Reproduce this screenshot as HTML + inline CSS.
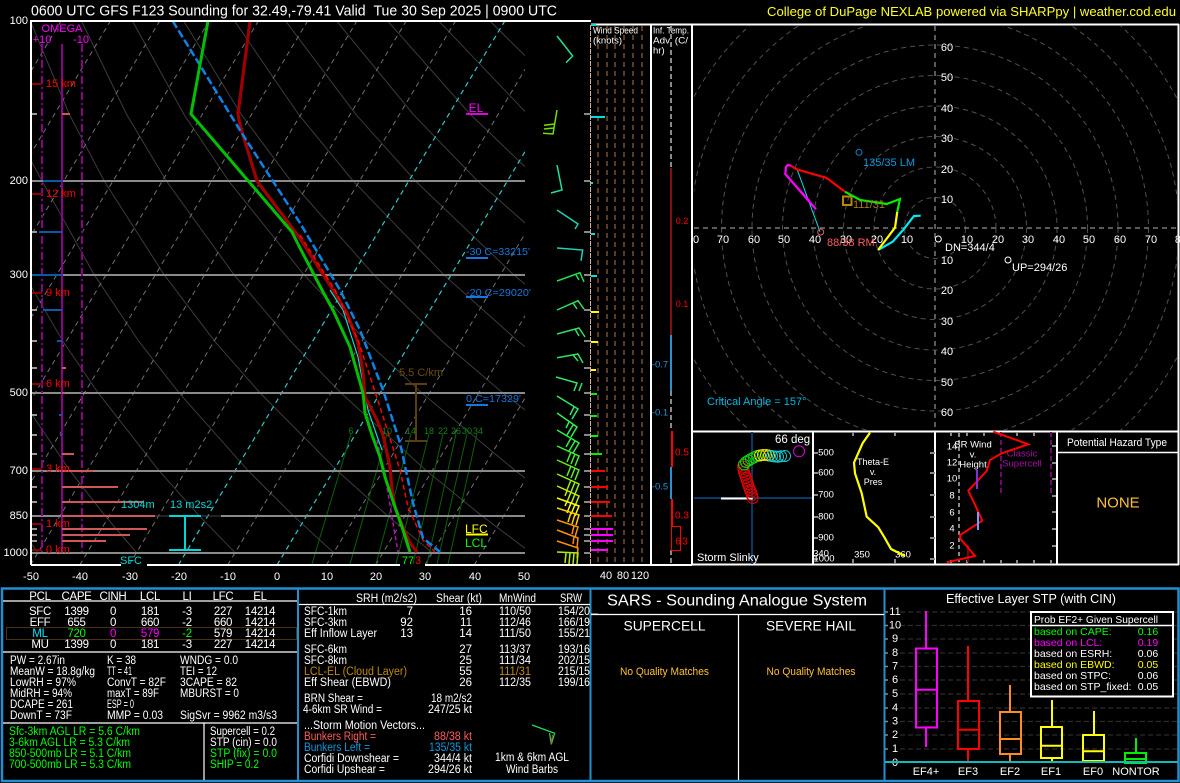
<!DOCTYPE html>
<html>
<head>
<meta charset="utf-8">
<title>SHARPpy Sounding</title>
<style>
html,body{margin:0;padding:0;background:#000;width:1180px;height:783px;overflow:hidden}
svg{display:block}
text{font-family:"Liberation Sans",sans-serif;font-size:11px;fill:#fff;dominant-baseline:central}
.m{text-anchor:middle}.e{text-anchor:end}
.s{font-size:9.5px}
.g{fill:#00ff00}.r{fill:#ff0000}.c{fill:#00d8d8}.bl{fill:#1478e0}
.t text{letter-spacing:-.3px;font-size:11.5px}
.p text{font-size:11.5px}
path,line,rect,circle,polyline{fill:none}
</style>
</head>
<body>
<svg xmlns="http://www.w3.org/2000/svg" width="1180" height="783" viewBox="0 0 1180 783">
<defs>
<clipPath id="skew"><rect x="32" y="22" width="493" height="542"/></clipPath>
<clipPath id="hodo"><rect x="694" y="26" width="483" height="404"/></clipPath>
</defs>
<rect x="0" y="0" width="1180" height="783" style="fill:#000"/>

<!-- header -->
<text x="31" y="11" style="font-size:15px" textLength="526" lengthAdjust="spacingAndGlyphs">0600 UTC GFS F123 Sounding for 32.49,-79.41 Valid&#160;&#160;Tue 30 Sep 2025 | 0900 UTC</text>
<text x="767" y="12" style="font-size:12.5px;fill:#ffff20" textLength="409" lengthAdjust="spacingAndGlyphs">College of DuPage NEXLAB powered via SHARPpy | weather.cod.edu</text>

<!-- SKEW-T grid -->
<g clip-path="url(#skew)">
 <path stroke="#3c3c3c" stroke-width="1" d="M37.9 552.7L10.5 515.2
 M136.5 552.7L104.6 515.2L69.7 470.3L17.1 392.6
 M235.1 552.7L198.7 515.2L158.7 470.3L98 392.6L62.8 341.1L24.3 274.7
 M333.7 552.7L292.8 515.2L247.8 470.3L178.8 392.6L138.7 341.1L94.2 274.7L42 181L20 140
 M432.3 552.7L386.9 515.2L336.8 470.3L259.8 392.6L214.5 341.1L164.1 274.7L104.2 181L69.4 114.6L30.4 21
 M530.9 552.7L481 515.2L425.9 470.3L340.6 392.6L290.4 341.1L234 274.7L166.4 181L126.7 114.6L81.5 21
 M575 515.2L514.9 470.3L421.5 392.6L366.3 341.1L303.9 274.7L228.7 181L184.1 114.6L132.5 21
 M603.9 470.3L502.4 392.6L442.1 341.1L373.8 274.7L290.9 181L241.4 114.6L183.6 21
 M583.3 392.6L518 341.1L443.7 274.7L353.2 181L298.7 114.6L234.6 21
 M593.8 341.1L513.6 274.7L415.4 181L356 114.6L285.6 21
 M583.5 274.7L477.6 181L413.4 114.6L336.7 21
 M539.8 181L470.6 114.6L387.7 21
 M528 114.6L438.8 21
 M585 114.6L489.8 21"/>
 <path stroke="#707070" stroke-width="1" stroke-dasharray="5 4" d="M-265.3 565L61.1 21M-216 565L110.4 21M-166.7 565L159.7 21M-117.4 565L209 21M-68.1 565L258.3 21M-18.8 565L307.6 21M30.5 565L356.9 21M79.8 565L406.2 21M129.1 565L455.5 21M227.7 565L554.1 21M326.3 565L652.7 21M375.6 565L702 21M424.9 565L751.3 21M474.2 565L800.6 21"/>
 <path stroke="#30c8c8" stroke-width="1.2" stroke-dasharray="5 4" d="M178.4 565L504.8 21M277 565L603.4 21"/>
 <!-- mixing ratio -->
 <path stroke="#0a600a" stroke-width="1" d="M351 434L312 564M387 434L350 564M411 434L376 564M429 434L396 564M443 434L413 564M456 434L427 564M467 434L437 564M477 434L448 564"/>
 <!-- isobars -->
 <path stroke="#8a8a8a" stroke-width="2" d="M31 181H525M31 275H525M31 393H525M31 471H525M31 516H155M221 516H525M31 553H525"/>
 <path stroke="#444" stroke-width="1" d="M155 516H221"/>
</g>
<!-- left ticks -->
<path stroke="#999" stroke-width="2" d="M31 114H37M31 232H37M31 310H37M31 341H37M31 368H37M31 415H37M31 435H37M31 454H37M31 487H37M31 502H37M31 529H37M31 535H37M31 541H37"/>
<!-- right ticks -->
<path stroke="#888" stroke-width="2" d="M584 114H590M584 181H590M584 232H590M584 275H590M584 310H590M584 341H590M584 368H590M584 393H590M584 415H590M584 435H590M584 454H590M584 471H590M584 487H590M584 502H590M584 516H590M584 529H590M584 535H590M584 541H590M584 553H590"/>

<!-- omega -->
<path stroke="#8b008b" stroke-width="2" d="M62 44V552"/>
<path stroke="#8b008b" stroke-width="2" stroke-dasharray="8 3 2 3" d="M42 44V552M82 44V552"/>
<text x="62" y="29" class="m" style="fill:#ff00ff;font-size:11px">OMEGA</text>
<text x="42" y="40" class="m" style="fill:#ff00ff;font-size:11px">+10</text>
<text x="81" y="40" class="m" style="fill:#ff00ff;font-size:11px">-10</text>
<path stroke="#d05858" stroke-width="2" d="M62 114H70M62 368H66M62 393H65M62 454H74M62 471H93M62 487H118M62 502H143M62 516H155M62 529H147M62 535H130M62 541H106"/>
<path stroke="#0b5aa8" stroke-width="2" d="M43 181H62M39 232H62M32 275H62M43 310H62M57 341H62M59 415H62M60 435H62"/>
<!-- height -->
<path stroke="#8b0000" stroke-width="2" d="M31 84H42M31 194H42M31 293H42M31 384H42M31 469H42M31 524H42M31 550H42"/>
<g class="h">
<text x="46" y="84" class="r">15 km</text>
<text x="46" y="194" class="r">12 km</text>
<text x="46" y="293" class="r">9 km</text>
<text x="46" y="384" class="r">6 km</text>
<text x="46" y="469" class="r">3 km</text>
<text x="46" y="524" class="r">1 km</text>
<text x="46" y="550" class="r">0 km</text>
</g>

<!-- profiles -->
<polyline stroke="#00e0d0" stroke-width="1.2" points="330,290 343,310 358,357 368,410 377,436 382,450"/>
<polyline stroke="#d000d0" stroke-width="1.5" stroke-dasharray="4 3" points="377,440 387,487 392,517 398,552"/>
<polyline stroke="#a00000" stroke-width="3.2" points="250,21 245,60 238,114 240,125 257,181 299,237 333,290 347,313 358,343 363,373 365,397 377,420 383,435 390,467 392,490 395,507 403,527 410,543 417,552"/>
<polyline stroke="#ff0000" stroke-width="1.5" stroke-dasharray="5 3" points="300,235 335,290 358,340 380,407 400,470 408,507 423,540 435,552"/>
<polyline stroke="#0a84e8" stroke-width="2.5" stroke-dasharray="8 3" points="172.7,21 241.7,133 300,223 340,290 360,330 383,390 400,443 413,503 423,538 440,552"/>
<polyline stroke="#00c000" stroke-width="3" points="208,21 191,114 292,232 300,248 322,290 333,310 350,347 363,393 365,413 372,435 380,457 385,477 395,507 403,530 410,552"/>

<!-- labels on skew-t -->
<path stroke="#e000e0" stroke-width="2" d="M466 114H488"/>
<text x="476" y="108" class="m" style="fill:#ff00ff;font-size:12px">EL</text>
<path stroke="#1478e0" stroke-width="2" d="M466 258H488M466 297H488M466 405H488"/>
<text x="466" y="252" class="bl" style="font-size:10.5px" textLength="64" lengthAdjust="spacingAndGlyphs">-30 C=33215'</text>
<text x="466" y="293" class="bl" style="font-size:10.5px" textLength="65" lengthAdjust="spacingAndGlyphs">-20 C=29020'</text>
<text x="466" y="399" class="bl" style="font-size:10.5px" textLength="55" lengthAdjust="spacingAndGlyphs">0 C=17329'</text>
<path stroke="#ffff00" stroke-width="2" d="M466 534.5H488"/>
<text x="465" y="529" style="fill:#ffff00;font-size:12px">LFC</text>
<text x="465" y="543" class="g" style="font-size:12px">LCL</text>
<text x="421" y="373" class="m" style="fill:#6e4c12;font-size:11px">5.5 C/km</text>
<path stroke="#5a3d10" stroke-width="2" d="M405 384H427M405 441H427M416 384V441"/>
<path stroke="#00d8d8" stroke-width="2" d="M169 516H201M169 550H201M185 516V550"/>
<text x="121" y="505" class="c">1304m</text>
<text x="170" y="505" class="c">13 m2s2</text>
<g style="fill:#0a8a0a">
<text x="351" y="431" class="m" style="fill:#128012;font-size:9px">6</text>
<text x="387" y="431" class="m" style="fill:#128012;font-size:9px">10</text>
<text x="411" y="431" class="m" style="fill:#128012;font-size:9px">14</text>
<text x="429" y="431" class="m" style="fill:#128012;font-size:9px">18</text>
<text x="443" y="431" class="m" style="fill:#128012;font-size:9px">22</text>
<text x="456" y="431" class="m" style="fill:#128012;font-size:9px">26</text>
<text x="467" y="431" class="m" style="fill:#128012;font-size:9px">30</text>
<text x="478" y="431" class="m" style="fill:#128012;font-size:9px">34</text>
</g>

<!-- frame -->
<path stroke="#fff" stroke-width="2" d="M31 565V21H591M31 565H121M147 565H400M425 565H591"/>
<text x="131" y="561" class="m c">SFC</text>
<text x="408" y="561" class="m g">77</text>
<text x="418" y="561" class="m r">3</text>

<!-- axis text -->
<text x="28" y="21" class="e">100</text>
<text x="28" y="181" class="e">200</text>
<text x="28" y="275" class="e">300</text>
<text x="28" y="393" class="e">500</text>
<text x="28" y="471" class="e">700</text>
<text x="28" y="516" class="e">850</text>
<text x="28" y="553" class="e">1000</text>
<text x="31" y="577" class="m">-50</text>
<text x="80" y="577" class="m">-40</text>
<text x="130" y="577" class="m">-30</text>
<text x="179" y="577" class="m">-20</text>
<text x="228" y="577" class="m">-10</text>
<text x="277" y="577" class="m">0</text>
<text x="327" y="577" class="m">10</text>
<text x="376" y="577" class="m">20</text>
<text x="425" y="577" class="m">30</text>
<text x="475" y="577" class="m">40</text>
<text x="524" y="577" class="m">50</text>

<!-- wind barbs -->
<g stroke-width="1.5" fill="none">
<path stroke="#20e090" d="M557 36L572.7 56L566 62.7"/>
<path stroke="#70e000" d="M557 110L553 134L543 133.3M554 128L544 129M554.7 124L544 125.3"/>
<path stroke="#20e0a0" d="M557 165L562 190L551 193"/>
<path stroke="#20d0b0" d="M557 210L578 224L575 229"/>
<path stroke="#20d0b8" d="M557 248L582.7 250L581 260.7"/>
<path stroke="#20e050" d="M557 281L580 272.7L584 282M576 275L579 280"/>
<path stroke="#30e060" d="M557 310L578 300.7L584 309M573 303L577 309"/>
<path stroke="#30e060" d="M557 334L579 328L585 337M575 329L579 336"/>
<path stroke="#30e060" d="M557 357.7L578 354L583 363M573 355L578 361"/>
<path stroke="#30e868" d="M556 377L577 383L574 391M582 383L579 391"/>
<path stroke="#30e868" d="M557 396L578 409L572 419M574 407L570 415"/>
<path stroke="#30f050" d="M557 413L577 427L571 437M573 425L567 435M569 422L566 428"/>
<path stroke="#30f040" d="M557 430L579 443L573 453M575 441L569 451M571 438L566 447"/>
<path stroke="#40f030" d="M557 446L579 456L575 466M575 454L571 464M571 452L567 462"/>
<path stroke="#60f020" d="M557 460L579 470L575 480M575 468L571 478M571 466L567 476"/>
<path stroke="#90f010" d="M557 474L579 484L575 494M575 482L571 492M571 480L567 490"/>
<path stroke="#c0f000" d="M557 486L579 496L575 506M575 494L571 504M571 492L567 502M567 491L565 496"/>
<path stroke="#ffff00" d="M557 498L579 506L575 516M575 504.5L571 514.5M571 503L567 513M567 501.5L565 506"/>
<path stroke="#ffd000" d="M557 508L579 515L576 525M575 514L572 524M571 512.5L568 522"/>
<path stroke="#ff9000" d="M557 520L578 527L575 537M574 526L572 534"/>
<path stroke="#ff9000" d="M557 530L578 538L577 548M574 536.5L573 544"/>
<path stroke="#ff9000" d="M557 541L578 548L577 558"/>
<path stroke="#b0f000" d="M557 552L578 553L577 564M574 553L573 564M570 553L569 564M566 553L565 563"/>
</g>

<!-- wind speed panel -->
<path stroke="#5a3a20" stroke-width="2" stroke-dasharray="5 4" d="M598 26V564M607 26V564M615 26V564M624 26V564M633 26V564M642 26V564"/>
<path stroke="#d8b0a0" stroke-width="1" stroke-dasharray="5 1" d="M590.5 25V564"/>
<path stroke="#fff" stroke-width="2" d="M591 24.5H693M651 25V565M692 25V565M591 565H692"/>
<text x="593" y="31" class="s" textLength="45" lengthAdjust="spacingAndGlyphs">Wind Speed</text>
<text x="593" y="41" class="s">(knots)</text>
<text x="653" y="31" class="s" textLength="36" lengthAdjust="spacingAndGlyphs">Inf. Temp.</text>
<text x="653" y="41" class="s" textLength="35" lengthAdjust="spacingAndGlyphs">Adv. (C/</text>
<text x="653" y="51" class="s">hr)</text>
<path stroke="#00e0e0" stroke-width="2" d="M591 25H596M591 117H605M591 183H593M591 234H595M591 276H597"/>
<path stroke="#ffff00" stroke-width="2" d="M591 312H599M591 342H598M591 370H596"/>
<path stroke="#00f000" stroke-width="2" d="M591 394H597M591 416H597M591 436H598M591 454H602"/>
<path stroke="#ff0000" stroke-width="2" d="M591 471H605M591 487H608M591 502H610M591 516H612"/>
<path stroke="#ff00ff" stroke-width="2" d="M591 529H613M591 535H613M591 541H613M591 550H608"/>
<text x="606" y="576" class="m">40</text>
<text x="623" y="576" class="m">80</text>
<text x="640" y="576" class="m">120</text>

<!-- inf temp adv -->
<path stroke="#8a8a8a" stroke-width="2" stroke-dasharray="5 3" d="M671 26V168M671 391V431M671 550V564"/>
<path stroke="#ff2020" stroke-width="1" d="M671 168V335"/>
<path stroke="#2a90d0" stroke-width="2" d="M671 335V391M671 467V499"/>
<path stroke="#ff0000" stroke-width="2" d="M672 431V467M672 499V526"/>
<rect x="671.5" y="526.5" width="9" height="24" stroke="#ff0000" stroke-width="1"/>
<g style="font-size:9px">
<text x="682" y="221" class="m r" style="font-size:9px">0.2</text>
<text x="682" y="304" class="m r" style="font-size:9px">0.1</text>
<text x="682" y="453" class="m r" style="font-size:10px">0.5</text>
<text x="682" y="516" class="m r" style="font-size:10px">0.3</text>
<text x="678" y="542" class="m r" style="font-size:10px">6</text>
<text x="685" y="542" class="m r" style="font-size:10px">3</text>
<text x="660" y="365" class="m" style="fill:#2a90d0;font-size:9.5px">-0.7</text>
<text x="660" y="413" class="m" style="fill:#2a90d0;font-size:9.5px">-0.1</text>
<text x="660" y="487" class="m" style="fill:#2a90d0;font-size:9.5px">-0.5</text>
</g>

<!-- hodograph -->
<g clip-path="url(#hodo)">
<g stroke="#505050" stroke-width="1" stroke-dasharray="5 4">
<circle cx="935" cy="228" r="30.5"/><circle cx="935" cy="228" r="61"/><circle cx="935" cy="228" r="91.5"/><circle cx="935" cy="228" r="122"/><circle cx="935" cy="228" r="152.5"/><circle cx="935" cy="228" r="183"/><circle cx="935" cy="228" r="213.5"/><circle cx="935" cy="228" r="244"/><circle cx="935" cy="228" r="274.5"/>
</g>
<path stroke="#777" stroke-width="1.5" stroke-dasharray="5 4" d="M694 228H1177M935 26V430"/>
</g>
<g>
<text x="947" y="48" class="m">60</text><text x="947" y="78" class="m">50</text><text x="947" y="109" class="m">40</text><text x="947" y="139" class="m">30</text><text x="947" y="170" class="m">20</text><text x="947" y="200" class="m">10</text>
<text x="947" y="261" class="m">10</text><text x="947" y="291" class="m">20</text><text x="947" y="322" class="m">30</text><text x="947" y="352" class="m">40</text><text x="947" y="383" class="m">50</text><text x="947" y="413" class="m">60</text>
<text x="696" y="240" class="m">0</text><text x="723" y="240" class="m">70</text><text x="754" y="240" class="m">60</text><text x="784" y="240" class="m">50</text><text x="815" y="240" class="m">40</text><text x="846" y="240" class="m">30</text><text x="877" y="240" class="m">20</text><text x="907" y="240" class="m">10</text>
<text x="967" y="240" class="m">10</text><text x="998" y="240" class="m">20</text><text x="1028" y="240" class="m">30</text><text x="1059" y="240" class="m">40</text><text x="1089" y="240" class="m">50</text><text x="1120" y="240" class="m">60</text><text x="1151" y="240" class="m">70</text><text x="1181" y="240" class="m">80</text>
</g>
<polyline stroke="#00e0e0" stroke-width="1" points="796.7,168.3 820,231.7"/>
<polyline stroke="#e000e0" stroke-width="1" points="785,173.3 810,200.7"/>
<polyline stroke="#00e8f0" stroke-width="2.2" points="920.7,215.7 914,216 903,230 892.7,241.7 878,250"/>
<polyline stroke="#ffff00" stroke-width="2.2" points="878,250 895,227.7 897.3,211.7"/>
<polyline stroke="#00f000" stroke-width="2.2" points="897.3,211.7 900,199 886.7,204 860,200 845,191.7"/>
<polyline stroke="#ff0000" stroke-width="2.2" points="845,191.7 826.7,178 796.7,169.3 791,165.7"/>
<polyline stroke="#ff00ff" stroke-width="2.2" points="791,165.7 788,165 786,166.7 785.3,174 816,209.3"/>
<circle cx="820.7" cy="232" r="3" stroke="#e06060" stroke-width="1"/>
<circle cx="859" cy="152.3" r="3" stroke="#0a84d0" stroke-width="1"/>
<text x="863" y="163" style="fill:#0a9ae0">135/35 LM</text>
<rect x="843" y="196.5" width="8.5" height="8.5" stroke="#b8860b" stroke-width="2"/>
<text x="853" y="205" style="fill:#a87a10">111/31</text>
<text x="827" y="243" style="fill:#ff5c5c">88/38 RM</text>
<circle cx="938.3" cy="239" r="3" stroke="#fff" stroke-width="1"/>
<text x="945" y="248">DN=344/4</text>
<circle cx="1008" cy="260" r="3" stroke="#fff" stroke-width="1"/>
<text x="1012" y="268">UP=294/26</text>
<text x="707" y="402" style="fill:#00b8e0">Critical Angle = 157°</text>

<!-- borders right panel -->
<path stroke="#fff" stroke-width="2" d="M692 24.5H1179M1178.5 24V565M692 431.5H1179M813 431V565M935 431V565M1057 431V565M692 564.5H1179"/>

<!-- storm slinky -->
<path stroke="#0a3a6a" stroke-width="2" d="M694 498H812M752 432V564"/>
<path stroke="#fff" stroke-width="2" d="M721 498.5H752.7"/>
<g fill="none" stroke-width="1">
<g stroke="#e00000">
<circle cx="752.7" cy="498" r="5.5"/><circle cx="752" cy="495" r="5.5"/><circle cx="751" cy="492" r="5.5"/><circle cx="750" cy="490" r="5.5"/><circle cx="749" cy="487" r="5.5"/><circle cx="748" cy="484" r="5.5"/><circle cx="747" cy="481" r="5.5"/><circle cx="746" cy="478" r="5.5"/><circle cx="745" cy="475" r="5.5"/><circle cx="744" cy="472" r="5.5"/><circle cx="743.5" cy="469" r="5.5"/><circle cx="743" cy="466.7" r="5.5"/>
</g>
<g stroke="#10d010">
<circle cx="744" cy="464.5" r="5.5"/><circle cx="746" cy="462" r="5.5"/><circle cx="748.5" cy="460.5" r="5.5"/><circle cx="751" cy="459" r="5.5"/><circle cx="754" cy="457.5" r="5.5"/><circle cx="757" cy="456" r="5.5"/>
</g>
<g stroke="#e8e000">
<circle cx="760" cy="455.5" r="5.5"/><circle cx="763" cy="455" r="5.5"/><circle cx="766" cy="455" r="5.5"/><circle cx="769" cy="455.5" r="5.5"/>
</g>
<g stroke="#10c8d0">
<circle cx="772" cy="456" r="5.5"/><circle cx="775" cy="456.5" r="5.5"/><circle cx="778" cy="456.7" r="5.5"/><circle cx="781" cy="456.3" r="5.5"/><circle cx="785" cy="456" r="5.5"/>
</g>
<circle cx="799" cy="451.3" r="5.5" stroke="#e000e0"/>
</g>
<text x="775" y="440" style="font-size:11.5px">66 deg</text>
<text x="697" y="558" style="font-size:11px">Storm Slinky</text>

<!-- theta-e -->
<path stroke="#888" stroke-width="2" d="M814 453H818M814 473H818M814 495H818M814 517H818M814 538H818M814 559H818M930 453H935M930 473H935M930 495H935M930 517H935M930 538H935M930 559H935M853 432V436M895 432V436M853 559V564M895 559V564"/>
<text x="826" y="453" class="m s">500</text><text x="826" y="473" class="m s">600</text><text x="826" y="495" class="m s">700</text><text x="826" y="517" class="m s">800</text><text x="826" y="538" class="m s">900</text><text x="824" y="559" class="m s">1000</text>
<text x="821" y="554" class="m s">340</text><text x="862" y="555" class="m s">350</text><text x="903" y="555" class="m s">360</text>
<polyline stroke="#ffff00" stroke-width="2.2" points="870,432.7 862.7,443 854,462.7 855,473.3 861.7,493.3 866.7,516.7 878.3,527.3 885,538.3 891,549 905,556"/>
<text x="873" y="462" class="m s" style="font-size:9px">Theta-E</text><text x="873" y="472" class="m s" style="font-size:9px">v.</text><text x="873" y="482" class="m s" style="font-size:9px">Pres</text>

<!-- SR wind -->
<path stroke="#888" stroke-width="2" d="M951 432V436M967 432V436M984 432V436M1001 432V436M1017 432V436M1034 432V436M1051 432V436M951 560V564M967 560V564M984 560V564M1001 560V564M1017 560V564M1034 560V564M1051 560V564M1052 446H1056M1052 463H1056M1052 479H1056M1052 496H1056M1052 512H1056M1052 529H1056M1052 546H1056"/>
<path stroke="#888" stroke-width="2" stroke-dasharray="4 3" d="M959 433V562"/>
<path stroke="#6a0a6a" stroke-width="2" stroke-dasharray="5 3" d="M1001 432V496M1051 432V496"/>
<text x="1022" y="454" class="m s" style="fill:#a010a0">Classic</text><text x="1022" y="464" class="m s" style="fill:#a010a0">Supercell</text>
<text x="952" y="447" class="m s">14</text><text x="952" y="463" class="m s">12</text><text x="952" y="479" class="m s">10</text><text x="952" y="496" class="m s">8</text><text x="952" y="513" class="m s">6</text><text x="952" y="529" class="m s">4</text><text x="952" y="546" class="m s">2</text>
<path stroke="#800000" stroke-width="2" d="M968 545V562"/>
<polyline stroke="#ff0000" stroke-width="2" points="993.3,431.7 1028.3,444.3 1001.7,453.3 990,460 986.7,471 968.3,490.7 976.7,508.3 982.3,520.7 960,535 960,538.3 975,556 946.7,562.3"/>
<path stroke="#8a2be2" stroke-width="2" d="M977 470V489"/>
<path stroke="#6ea0ff" stroke-width="2" d="M978 512V530"/>
<text x="973" y="445" class="m s">SR Wind</text><text x="973" y="455" class="m s">v.</text><text x="973" y="465" class="m s">Height</text>

<!-- hazard -->
<path stroke="#fff" stroke-width="1.5" d="M1057 452.5H1178"/>
<text x="1117" y="443" class="m" textLength="100" lengthAdjust="spacingAndGlyphs">Potential Hazard Type</text>
<text x="1118" y="503" class="m" style="fill:#ffc030;font-size:15px">NONE</text>

<!-- BOTTOM -->
<rect x="2" y="588.5" width="1176.5" height="192.5" stroke="#2090d0" stroke-width="2.5"/>
<path stroke="#2090d0" stroke-width="2" d="M298 588V781M590.5 588V781M884.5 588V781"/>

<!-- panel 1 -->
<path stroke="#fff" stroke-width="1.2" d="M3 601H297M3 652H297M3 723H297M204 723V780"/>
<rect x="6.5" y="627.5" width="290" height="12" stroke="#4a3015" stroke-width="1"/>
<g class="t">
<text x="40" y="597" class="m">PCL</text><text x="76.5" y="597" class="m">CAPE</text><text x="113" y="597" class="m">CINH</text><text x="150" y="597" class="m">LCL</text><text x="187" y="597" class="m">LI</text><text x="223" y="597" class="m">LFC</text><text x="260" y="597" class="m">EL</text>
<text x="40" y="612" class="m">SFC</text><text x="76.5" y="612" class="m">1399</text><text x="113" y="612" class="m">0</text><text x="150" y="612" class="m">181</text><text x="187" y="612" class="m">-3</text><text x="223" y="612" class="m">227</text><text x="260" y="612" class="m">14214</text>
<text x="40" y="623" class="m">EFF</text><text x="76.5" y="623" class="m">655</text><text x="113" y="623" class="m">0</text><text x="150" y="623" class="m">660</text><text x="187" y="623" class="m">-2</text><text x="223" y="623" class="m">660</text><text x="260" y="623" class="m">14214</text>
<text x="40" y="634" class="m" style="fill:#00e8ff">ML</text><text x="76.5" y="634" class="m g">720</text><text x="113" y="634" class="m" style="fill:#ff00ff">0</text><text x="150" y="634" class="m" style="fill:#ff00ff">579</text><text x="187" y="634" class="m g">-2</text><text x="223" y="634" class="m">579</text><text x="260" y="634" class="m">14214</text>
<text x="40" y="645" class="m">MU</text><text x="76.5" y="645" class="m">1399</text><text x="113" y="645" class="m">0</text><text x="150" y="645" class="m">181</text><text x="187" y="645" class="m">-3</text><text x="223" y="645" class="m">227</text><text x="260" y="645" class="m">14214</text>
</g>
<g class="p">
<text x="10" y="661" textLength="55" lengthAdjust="spacingAndGlyphs">PW = 2.67in</text><text x="107" y="661" textLength="29" lengthAdjust="spacingAndGlyphs">K = 38</text><text x="180" y="661" textLength="58" lengthAdjust="spacingAndGlyphs">WNDG = 0.0</text>
<text x="10" y="672" textLength="85" lengthAdjust="spacingAndGlyphs">MeanW = 18.8g/kg</text><text x="107" y="672" textLength="25" lengthAdjust="spacingAndGlyphs">TT = 41</text><text x="180" y="672" textLength="37" lengthAdjust="spacingAndGlyphs">TEI = 12</text>
<text x="10" y="683" textLength="66" lengthAdjust="spacingAndGlyphs">LowRH = 97%</text><text x="107" y="683" textLength="59" lengthAdjust="spacingAndGlyphs">ConvT = 82F</text><text x="180" y="683" textLength="57" lengthAdjust="spacingAndGlyphs">3CAPE = 82</text>
<text x="10" y="694" textLength="62" lengthAdjust="spacingAndGlyphs">MidRH = 94%</text><text x="107" y="694" textLength="52" lengthAdjust="spacingAndGlyphs">maxT = 89F</text><text x="180" y="694" textLength="59" lengthAdjust="spacingAndGlyphs">MBURST = 0</text>
<text x="10" y="705" textLength="63" lengthAdjust="spacingAndGlyphs">DCAPE = 261</text><text x="107" y="705" textLength="27" lengthAdjust="spacingAndGlyphs">ESP = 0</text>
<text x="10" y="716" textLength="62" lengthAdjust="spacingAndGlyphs">DownT = 73F</text><text x="107" y="716" textLength="56" lengthAdjust="spacingAndGlyphs">MMP = 0.03</text><text x="180" y="716" textLength="97" lengthAdjust="spacingAndGlyphs">SigSvr = 9962 m3/s3</text>

<text x="9" y="732" class="g" textLength="131" lengthAdjust="spacingAndGlyphs">Sfc-3km AGL LR = 5.6 C/km</text>
<text x="9" y="743" class="g" textLength="121" lengthAdjust="spacingAndGlyphs">3-6km AGL LR = 5.3 C/km</text>
<text x="9" y="754" class="g" textLength="122" lengthAdjust="spacingAndGlyphs">850-500mb LR = 5.1 C/km</text>
<text x="9" y="765" class="g" textLength="122" lengthAdjust="spacingAndGlyphs">700-500mb LR = 5.3 C/km</text>
<text x="210" y="732" textLength="65" lengthAdjust="spacingAndGlyphs">Supercell = 0.2</text>
<text x="210" y="743" textLength="67" lengthAdjust="spacingAndGlyphs">STP (cin) = 0.0</text>
<text x="210" y="754" class="g" textLength="67" lengthAdjust="spacingAndGlyphs">STP (fix) = 0.0</text>
<text x="210" y="765" class="g" textLength="49" lengthAdjust="spacingAndGlyphs">SHIP = 0.2</text>
</g>

<!-- panel 2 -->
<path stroke="#fff" stroke-width="1.2" d="M299 604.5H590"/>
<g class="p">
<text x="356" y="599" textLength="61" lengthAdjust="spacingAndGlyphs">SRH (m2/s2)</text><text x="436" y="599" textLength="46" lengthAdjust="spacingAndGlyphs">Shear (kt)</text><text x="499" y="599" textLength="37" lengthAdjust="spacingAndGlyphs">MnWind</text><text x="560" y="599" textLength="22" lengthAdjust="spacingAndGlyphs">SRW</text>
<text x="304" y="612" textLength="43" lengthAdjust="spacingAndGlyphs">SFC-1km</text><text x="413" y="612" class="e">7</text><text x="472" y="612" class="e">16</text><text x="515" y="612" class="m" textLength="32" lengthAdjust="spacingAndGlyphs">110/50</text><text x="590" y="612" class="e" textLength="32" lengthAdjust="spacingAndGlyphs">154/20</text>
<text x="304" y="623" textLength="43" lengthAdjust="spacingAndGlyphs">SFC-3km</text><text x="413" y="623" class="e">92</text><text x="472" y="623" class="e">11</text><text x="515" y="623" class="m" textLength="32" lengthAdjust="spacingAndGlyphs">112/46</text><text x="590" y="623" class="e" textLength="32" lengthAdjust="spacingAndGlyphs">166/19</text>
<text x="304" y="634" textLength="73" lengthAdjust="spacingAndGlyphs">Eff Inflow Layer</text><text x="413" y="634" class="e">13</text><text x="472" y="634" class="e">14</text><text x="515" y="634" class="m" textLength="32" lengthAdjust="spacingAndGlyphs">111/50</text><text x="590" y="634" class="e" textLength="32" lengthAdjust="spacingAndGlyphs">155/21</text>
<text x="304" y="650" textLength="43" lengthAdjust="spacingAndGlyphs">SFC-6km</text><text x="472" y="650" class="e">27</text><text x="515" y="650" class="m" textLength="32" lengthAdjust="spacingAndGlyphs">113/37</text><text x="590" y="650" class="e" textLength="32" lengthAdjust="spacingAndGlyphs">193/16</text>
<text x="304" y="661" textLength="43" lengthAdjust="spacingAndGlyphs">SFC-8km</text><text x="472" y="661" class="e">25</text><text x="515" y="661" class="m" textLength="32" lengthAdjust="spacingAndGlyphs">111/34</text><text x="590" y="661" class="e" textLength="32" lengthAdjust="spacingAndGlyphs">202/15</text>
<text x="304" y="672" style="fill:#c08a10" textLength="103" lengthAdjust="spacingAndGlyphs">LCL-EL (Cloud Layer)</text><text x="472" y="672" class="e">55</text><text x="515" y="672" class="m" style="fill:#c08a10" textLength="32" lengthAdjust="spacingAndGlyphs">111/31</text><text x="590" y="672" class="e" textLength="32" lengthAdjust="spacingAndGlyphs">215/15</text>
<text x="304" y="683" textLength="87" lengthAdjust="spacingAndGlyphs">Eff Shear (EBWD)</text><text x="472" y="683" class="e">26</text><text x="515" y="683" class="m" textLength="32" lengthAdjust="spacingAndGlyphs">112/35</text><text x="590" y="683" class="e" textLength="32" lengthAdjust="spacingAndGlyphs">199/16</text>
<text x="304" y="699" textLength="59" lengthAdjust="spacingAndGlyphs">BRN Shear =</text><text x="472" y="699" class="e" textLength="41" lengthAdjust="spacingAndGlyphs">18 m2/s2</text>
<text x="303" y="710" textLength="79" lengthAdjust="spacingAndGlyphs">4-6km SR Wind =</text><text x="472" y="710" class="e" textLength="44" lengthAdjust="spacingAndGlyphs">247/25 kt</text>
<text x="304" y="726" textLength="121" lengthAdjust="spacingAndGlyphs">...Storm Motion Vectors...</text>
<text x="304" y="737" style="fill:#ff5c5c" textLength="72" lengthAdjust="spacingAndGlyphs">Bunkers Right =</text><text x="472" y="737" class="e" style="fill:#ff5c5c" textLength="38" lengthAdjust="spacingAndGlyphs">88/38 kt</text>
<text x="304" y="748" style="fill:#0a9ae0" textLength="66" lengthAdjust="spacingAndGlyphs">Bunkers Left =</text><text x="472" y="748" class="e" style="fill:#0a9ae0" textLength="43" lengthAdjust="spacingAndGlyphs">135/35 kt</text>
<text x="304" y="759" textLength="95" lengthAdjust="spacingAndGlyphs">Corfidi Downshear =</text><text x="472" y="759" class="e" textLength="38" lengthAdjust="spacingAndGlyphs">344/4 kt</text>
<text x="304" y="770" textLength="81" lengthAdjust="spacingAndGlyphs">Corfidi Upshear =</text><text x="472" y="770" class="e" textLength="44" lengthAdjust="spacingAndGlyphs">294/26 kt</text>
<text x="532" y="758" class="m" textLength="74" lengthAdjust="spacingAndGlyphs">1km &amp; 6km AGL</text>
<text x="532" y="770" class="m" textLength="52" lengthAdjust="spacingAndGlyphs">Wind Barbs</text>
</g>
<path stroke="#20e050" stroke-width="1.2" d="M532 725L554.7 733.3L551.3 744.3L549.5 733"/>
<path stroke="#ff3030" stroke-width="1" d="M552.5 735L551 744"/>
<path stroke="#ddd" stroke-width="1" d="M591 614H598"/>

<!-- SARS -->
<path stroke="#fff" stroke-width="1.2" d="M591 614.5H884M738.5 615V780"/>
<text x="737" y="601" class="m" style="font-size:16px" textLength="260" lengthAdjust="spacingAndGlyphs">SARS - Sounding Analogue System</text>
<text x="664.5" y="625.5" class="m" style="font-size:14px" textLength="82" lengthAdjust="spacingAndGlyphs">SUPERCELL</text>
<text x="811" y="625.5" class="m" style="font-size:14px" textLength="90" lengthAdjust="spacingAndGlyphs">SEVERE HAIL</text>
<text x="664.5" y="672" class="m" style="fill:#ffc030;font-size:11px" textLength="89" lengthAdjust="spacingAndGlyphs">No Quality Matches</text>
<text x="811" y="672" class="m" style="fill:#ffc030;font-size:11px" textLength="89" lengthAdjust="spacingAndGlyphs">No Quality Matches</text>

<!-- STP -->
<path stroke="#2c2c2c" stroke-width="1.2" stroke-dasharray="5 3" d="M900 612H1178M900 625.5H1178M900 639H1178M900 653H1178M900 666.5H1178M900 680H1178M900 694H1178M900 708H1178M900 721.5H1178M900 735H1178M900 749H1178"/>
<path stroke="#888" stroke-width="1.5" d="M885 612H888M885 625.5H888M885 639H888M885 653H888M885 666.5H888M885 680H888M885 694H888M885 708H888M885 721.5H888M885 735H888M885 749H888"/>
<text x="1031" y="599" class="m" style="font-size:12.5px" textLength="170" lengthAdjust="spacingAndGlyphs">Effective Layer STP (with CIN)</text>
<text x="895" y="612" class="m">11</text><text x="895" y="625.5" class="m">10</text><text x="895" y="639" class="m">9</text><text x="895" y="653" class="m">8</text><text x="895" y="666.5" class="m">7</text><text x="895" y="680" class="m">6</text><text x="895" y="694" class="m">5</text><text x="895" y="708" class="m">4</text><text x="895" y="721.5" class="m">3</text><text x="895" y="735" class="m">2</text><text x="895" y="749" class="m">1</text><text x="895" y="763" class="m">0</text>

<g stroke="#ff00ff" stroke-width="2"><path d="M926 611V648M926 727V747M916 689.7H937"/><rect x="916" y="648.5" width="21" height="79"/></g>
<g stroke="#ff0000" stroke-width="2"><path d="M968 646V701M968 749V761M958 729.7H979"/><rect x="958" y="701" width="21" height="48"/></g>
<g stroke="#ff8c20" stroke-width="2"><path d="M1010 685V712M1010 754V763M1000 739H1021"/><rect x="1000" y="712" width="21" height="42"/></g>
<g stroke="#ffff00" stroke-width="2"><path d="M1052 700V727M1052 758V763M1041 745.7H1062"/><rect x="1041" y="727" width="21" height="31"/></g>
<g stroke="#ffff00" stroke-width="2"><path d="M1094 711V735M1094 761V763M1083 751.3H1104"/><rect x="1083" y="735" width="21" height="26"/></g>
<g stroke="#00f000" stroke-width="2"><path d="M1136 738V753M1125 759H1146"/><rect x="1125" y="753" width="21" height="10"/></g>
<path stroke="#10b8c0" stroke-width="2" d="M885 762H1178"/>
<text x="926" y="772" class="m">EF4+</text><text x="968" y="772" class="m">EF3</text><text x="1010" y="772" class="m">EF2</text><text x="1051" y="772" class="m">EF1</text><text x="1093" y="772" class="m">EF0</text><text x="1136" y="772" class="m">NONTOR</text>

<rect x="1031" y="612" width="142" height="84.5" stroke="#fff" stroke-width="2" style="fill:#000"/>
<path stroke="#fff" stroke-width="1.5" d="M1031 625.5H1173"/>
<text x="1034" y="620" style="font-size:10.5px" textLength="124" lengthAdjust="spacingAndGlyphs">Prob EF2+ Given Supercell</text>
<g style="font-size:10.5px">
<text x="1034" y="632" class="g" style="font-size:10.5px">based on CAPE:</text><text x="1148" y="632" class="m g" style="font-size:10.5px">0.16</text>
<text x="1034" y="643" style="fill:#ff00ff;font-size:10.5px">based on LCL:</text><text x="1148" y="643" class="m" style="fill:#ff00ff;font-size:10.5px">0.19</text>
<text x="1034" y="654" style="font-size:10.5px">based on ESRH:</text><text x="1148" y="654" class="m" style="font-size:10.5px">0.06</text>
<text x="1034" y="665" style="fill:#ffff00;font-size:10.5px">based on EBWD:</text><text x="1148" y="665" class="m" style="fill:#ffff00;font-size:10.5px">0.05</text>
<text x="1034" y="676" style="font-size:10.5px">based on STPC:</text><text x="1148" y="676" class="m" style="font-size:10.5px">0.06</text>
<text x="1034" y="687" style="font-size:10.5px">based on STP_fixed:</text><text x="1148" y="687" class="m" style="font-size:10.5px">0.05</text>
</g>
</svg>
</body>
</html>
